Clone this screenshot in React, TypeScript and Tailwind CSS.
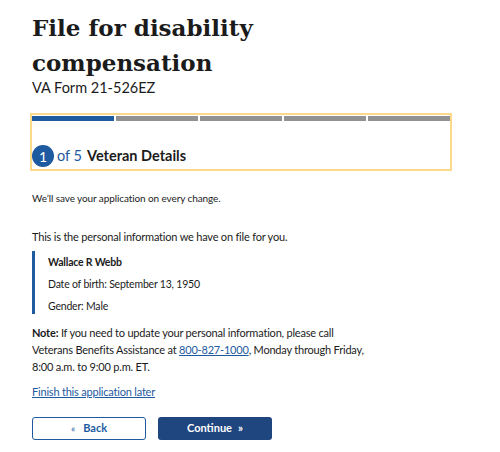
import React from 'react';

const sans = "font-['Lato','Open_Sans',sans-serif]";

export default function App() {
  const steps = [true, false, false, false, false];

  return (
    <div className={`w-[500px] h-[452px] bg-white text-[#1b1b1b] ${sans}`}>
      <div className="pl-8 pt-[10px]">
        <h1 className="font-['DejaVu_Serif',serif] font-bold text-[23px] leading-[35px] text-[#1b1b1b]">
          File for disability
          <br />
          compensation
        </h1>
        <p className="text-[14.5px] leading-4">VA Form 21-526EZ</p>

        <div className="mt-[17px] -ml-[2px] w-[422px] border-2 border-[#fbd88a] pt-px pb-[2px]">
          <div className="flex gap-[2px]">
            {steps.map((active, i) => (
              <div key={i} className={`h-[5px] flex-1 ${active ? 'bg-[#1d5aa0]' : 'bg-[#929292]'}`} />
            ))}
          </div>
          <div className="flex items-center mt-6 h-[22px]">
            <span className="w-[22px] h-[22px] rounded-full bg-[#1d5aa0] text-white text-[14px] flex items-center justify-center">1</span>
            <span className="ml-[3px] text-[14.5px] text-[#1d5aa0]">of 5</span>
            <span className="ml-[5px] text-[14.5px] font-bold">Veteran Details</span>
          </div>
        </div>

        <p className="text-[10px] tracking-[-0.1px] mt-[19px] leading-4">We’ll save your application on every change.</p>
        <p className="text-[11px] tracking-[-0.2px] mt-[23px] leading-4">This is the personal information we have on file for you.</p>

        <div className="mt-[6px] border-l-[3px] border-[#1d5aa0] pl-[13px] pt-[3px] text-[10.5px] tracking-[-0.2px] leading-4 space-y-[6px]">
          <p className="font-bold">Wallace R Webb</p>
          <p>Date of birth: September 13, 1950</p>
          <p>Gender: Male</p>
        </div>

        <p className="mt-[10px] text-[11px] tracking-[-0.2px] leading-[17px] w-[340px]">
          <span className="font-bold">Note:</span> If you need to update your personal information, please call
          Veterans Benefits Assistance at{' '}
          <a href="#" className="text-[#1d5aa0] underline">800-827-1000</a>, Monday through Friday,
          8:00 a.m. to 9:00 p.m. ET.
        </p>

        <a href="#" className="block w-fit mt-[9px] text-[11px] tracking-[-0.2px] leading-4 text-[#1d5aa0] underline">Finish this application later</a>

        <div className="flex gap-3 mt-[17px]">
          <button className="w-[114px] h-[23px] border border-[#1d5aa0] rounded-[3px] text-[#1d5aa0] text-[11px] font-bold flex items-center justify-center gap-2">
            <span className="text-[10px] font-normal">«</span>Back
          </button>
          <button className="w-[114px] h-[23px] bg-[#1f467f] rounded-[3px] text-white text-[11px] font-bold flex items-center justify-center gap-[6px]">
            Continue<span className="text-[11px]">»</span>
          </button>
        </div>
      </div>
    </div>
  );
}
